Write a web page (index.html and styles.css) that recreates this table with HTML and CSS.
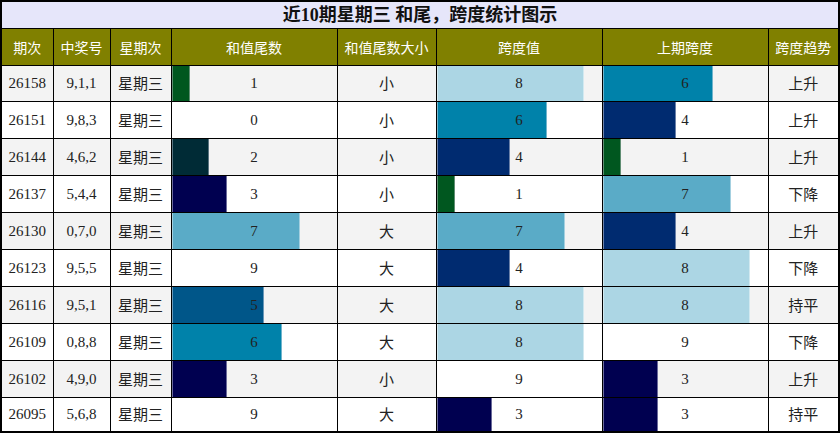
FILE: index.html
```html
<!DOCTYPE html>
<html lang="zh">
<head>
<meta charset="utf-8">
<title>近10期星期三 和尾，跨度统计图示</title>
<link rel="stylesheet" href="styles.css">
</head>
<body>
<table class="stat">
  <colgroup>
    <col class="c-no"><col class="c-num"><col class="c-wk"><col class="c-bar"><col class="c-size"><col class="c-bar"><col class="c-bar"><col class="c-trend">
  </colgroup>
  <thead>
    <tr class="title-row"><th colspan="8" class="title">近10期星期三 和尾，跨度统计图示</th></tr>
    <tr class="head-row">
      <th>期次</th><th>中奖号</th><th>星期次</th><th>和值尾数</th><th>和值尾数大小</th><th>跨度值</th><th>上期跨度</th><th>跨度趋势</th>
    </tr>
  </thead>
  <tbody>
    <tr class="odd first">
      <td>26158</td><td>9,1,1</td><td class="cn">星期三</td>
      <td class="bc v1" style="--w:11.11%">1</td>
      <td class="cn">小</td>
      <td class="bc v8" style="--w:88.89%">8</td>
      <td class="bc v6" style="--w:66.67%">6</td>
      <td class="cn">上升</td>
    </tr>
    <tr>
      <td>26151</td><td>9,8,3</td><td class="cn">星期三</td>
      <td class="bc v0" style="--w:0%">0</td>
      <td class="cn">小</td>
      <td class="bc v6" style="--w:66.67%">6</td>
      <td class="bc v4" style="--w:44.44%">4</td>
      <td class="cn">上升</td>
    </tr>
    <tr class="odd">
      <td>26144</td><td>4,6,2</td><td class="cn">星期三</td>
      <td class="bc v2" style="--w:22.22%">2</td>
      <td class="cn">小</td>
      <td class="bc v4" style="--w:44.44%">4</td>
      <td class="bc v1" style="--w:11.11%">1</td>
      <td class="cn">上升</td>
    </tr>
    <tr>
      <td>26137</td><td>5,4,4</td><td class="cn">星期三</td>
      <td class="bc v3" style="--w:33.33%">3</td>
      <td class="cn">小</td>
      <td class="bc v1" style="--w:11.11%">1</td>
      <td class="bc v7" style="--w:77.78%">7</td>
      <td class="cn">下降</td>
    </tr>
    <tr class="odd">
      <td>26130</td><td>0,7,0</td><td class="cn">星期三</td>
      <td class="bc v7" style="--w:77.78%">7</td>
      <td class="cn">大</td>
      <td class="bc v7" style="--w:77.78%">7</td>
      <td class="bc v4" style="--w:44.44%">4</td>
      <td class="cn">上升</td>
    </tr>
    <tr>
      <td>26123</td><td>9,5,5</td><td class="cn">星期三</td>
      <td class="bc v9" style="--w:100%">9</td>
      <td class="cn">大</td>
      <td class="bc v4" style="--w:44.44%">4</td>
      <td class="bc v8" style="--w:88.89%">8</td>
      <td class="cn">下降</td>
    </tr>
    <tr class="odd">
      <td>26116</td><td>9,5,1</td><td class="cn">星期三</td>
      <td class="bc v5" style="--w:55.56%">5</td>
      <td class="cn">大</td>
      <td class="bc v8" style="--w:88.89%">8</td>
      <td class="bc v8" style="--w:88.89%">8</td>
      <td class="cn">持平</td>
    </tr>
    <tr>
      <td>26109</td><td>0,8,8</td><td class="cn">星期三</td>
      <td class="bc v6" style="--w:66.67%">6</td>
      <td class="cn">大</td>
      <td class="bc v8" style="--w:88.89%">8</td>
      <td class="bc v9" style="--w:100%">9</td>
      <td class="cn">下降</td>
    </tr>
    <tr class="odd">
      <td>26102</td><td>4,9,0</td><td class="cn">星期三</td>
      <td class="bc v3" style="--w:33.33%">3</td>
      <td class="cn">小</td>
      <td class="bc v9" style="--w:100%">9</td>
      <td class="bc v3" style="--w:33.33%">3</td>
      <td class="cn">上升</td>
    </tr>
    <tr class="last">
      <td>26095</td><td>5,6,8</td><td class="cn">星期三</td>
      <td class="bc v9" style="--w:100%">9</td>
      <td class="cn">大</td>
      <td class="bc v3" style="--w:33.33%">3</td>
      <td class="bc v3" style="--w:33.33%">3</td>
      <td class="cn">持平</td>
    </tr>
  </tbody>
</table>
</body>
</html>
```

FILE: styles.css
```css
html, body {
  margin: 0;
  padding: 0;
  background: #ffffff;
}

.stat {
  width: 840px;
  border-collapse: collapse;
  table-layout: fixed;
  border: 2px solid #000;
  font-family: "Liberation Serif", "Noto Sans CJK SC", serif;
  font-size: 15px;
  color: #222;
}

.c-no { width: 52px; }
.c-num { width: 57px; }
.c-wk { width: 61px; }
.c-bar { width: 166px; }
.c-size { width: 99px; }
.c-trend { width: 71px; }

.stat th,
.stat td {
  border: 1px solid #000;
  padding: 0;
  text-align: center;
  vertical-align: middle;
  line-height: 18px;
}

.title-row {
  height: 27px;
}

.title {
  background: #e6e6fa;
  font-family: "Liberation Serif", "Noto Sans CJK SC", serif;
  font-size: 18px;
  font-weight: bold;
  color: #111;
}

.head-row {
  height: 37px;
}

.head-row th {
  background: #808000;
  color: #ffffff;
  font-family: "Noto Sans CJK SC", sans-serif;
  font-size: 14px;
  font-weight: normal;
}

.stat tbody tr {
  height: 37px;
  background: #ffffff;
}

.stat tbody tr.first {
  height: 36px;
}

.stat tbody tr.last {
  height: 35px;
}

.stat tbody tr.odd {
  background: #f3f3f3;
}

.stat td.cn {
  font-family: "Noto Sans CJK SC", sans-serif;
  font-size: 15px;
  color: #222;
}

.stat td.bc {
  background-image: linear-gradient(90deg,
    var(--e) 0 1px,
    var(--c) 1px calc(var(--w) - 1px),
    var(--e) calc(var(--w) - 1px) var(--w),
    transparent var(--w));
  background-repeat: no-repeat;
  background-clip: padding-box;
}

.stat td.v0 { background-image: none; }
.stat td.v1 { --c: #00571f; --e: #5f8d72; }
.stat td.v2 { --c: #002b36; --e: #5a7480; }
.stat td.v3 { --c: #000050; --e: #6a6a9a; }
.stat td.v4 { --c: #002b70; --e: #6a80a8; }
.stat td.v5 { --c: #005689; --e: #6a98b8; }
.stat td.v6 { --c: #0082aa; --e: #70b4cc; }
.stat td.v7 { --c: #5aabc7; --e: #a4d0e0; }
.stat td.v8 { --c: #acd6e4; --e: #d2e9f0; }
.stat td.v9 { --c: #ffffff; --e: #ffffff; }
```
